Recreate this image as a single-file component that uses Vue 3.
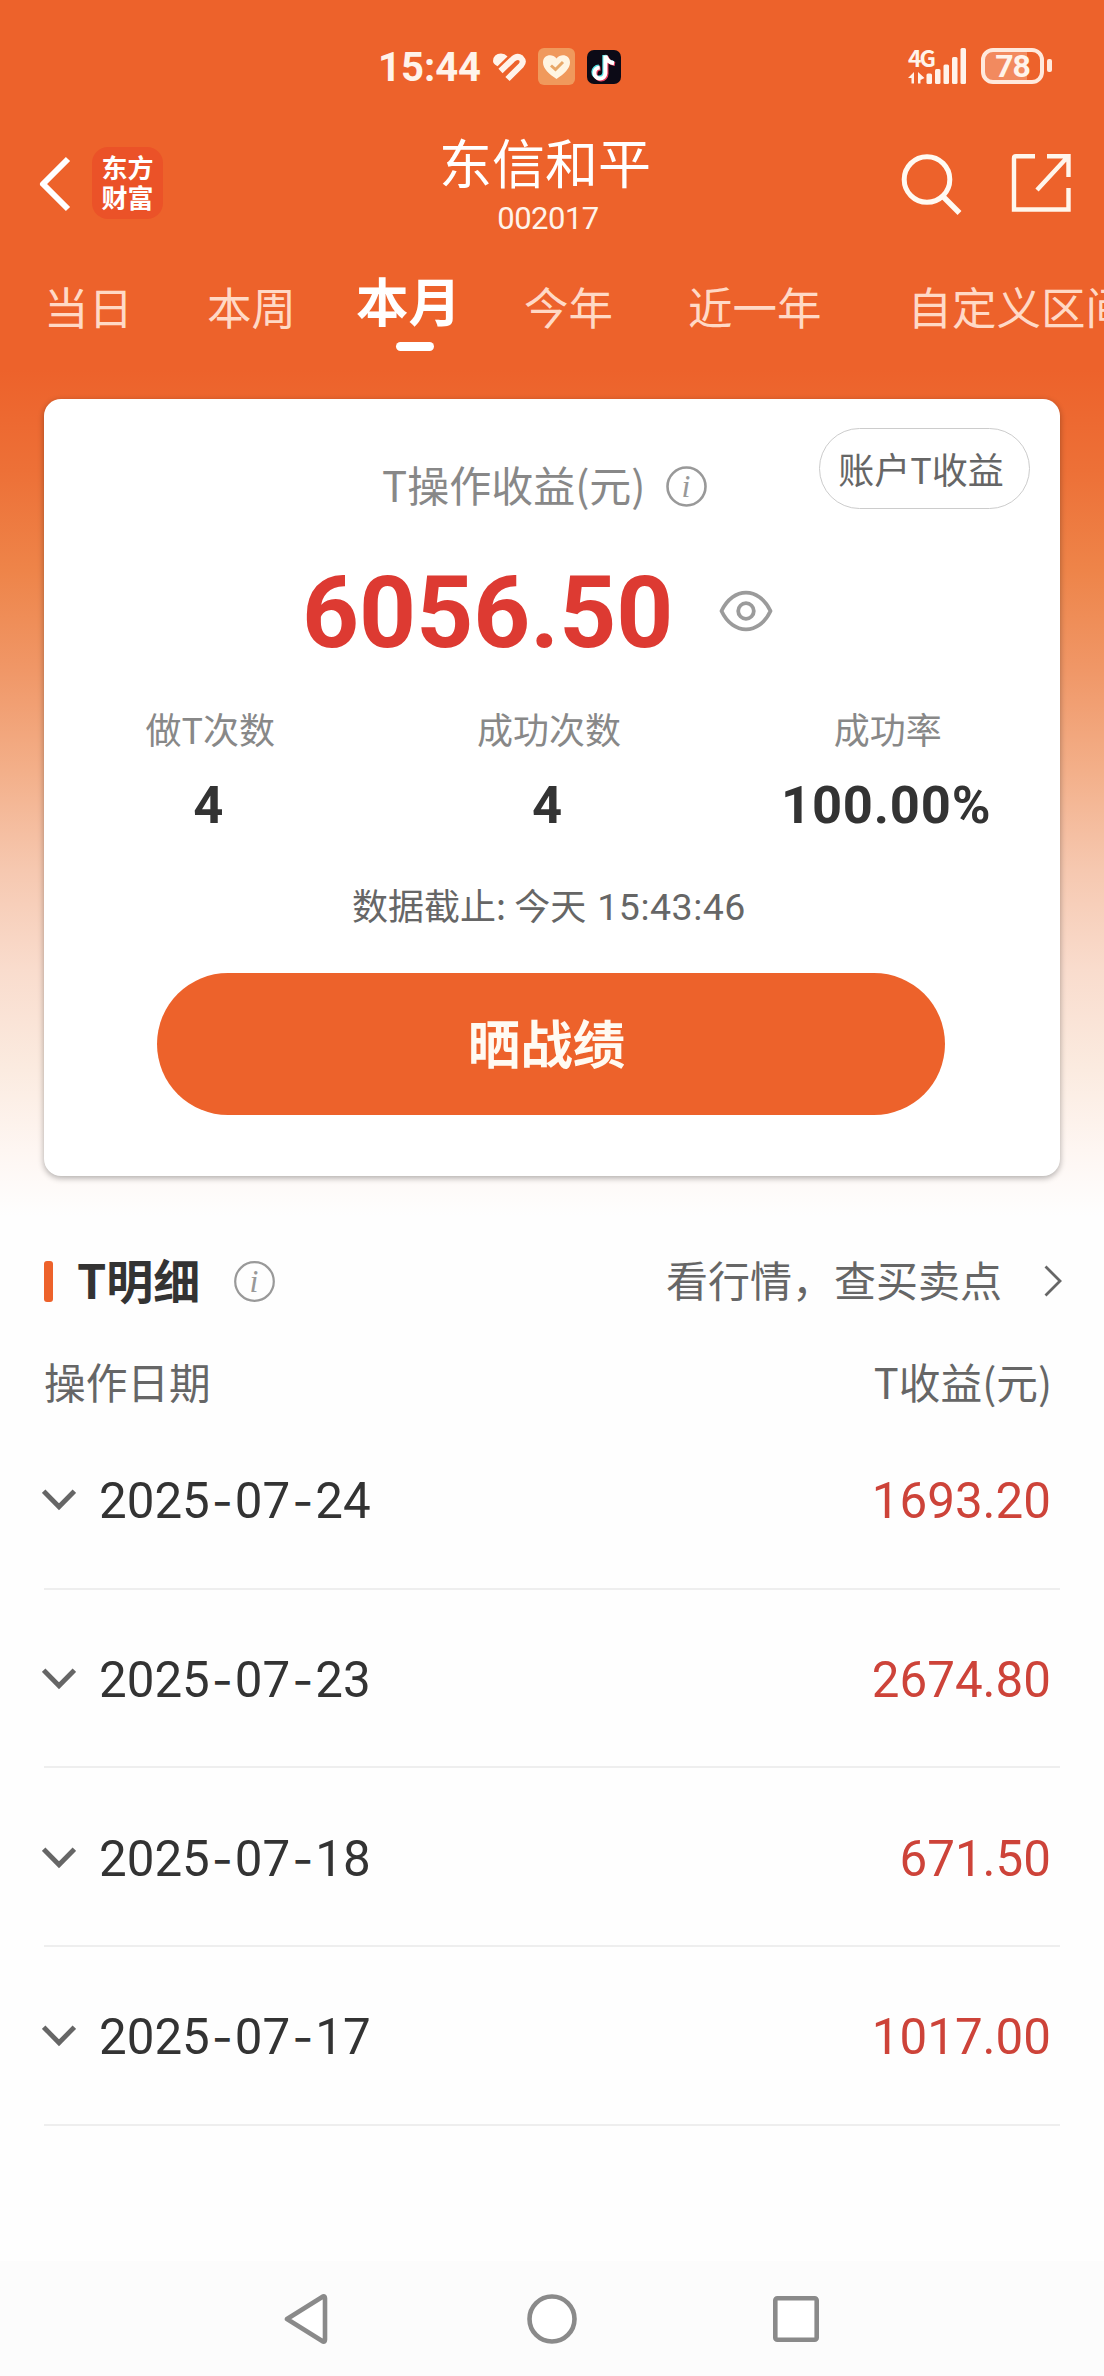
<script setup>
const tabs = [
  { label: '当日', gap: 44 },
  { label: '本周', gap: 74 },
  { label: '本月', gap: 60, active: true },
  { label: '今年', gap: 63 },
  { label: '近一年', gap: 75 },
  { label: '自定义区间', gap: 86 },
]

const stats = [
  { label: '做T次数', value: '4' },
  { label: '成功次数', value: '4' },
  { label: '成功率', value: '100.00%' },
]

const records = [
  { date: ['2025', '07', '24'], profit: '1693.20' },
  { date: ['2025', '07', '23'], profit: '2674.80' },
  { date: ['2025', '07', '18'], profit: '671.50' },
  { date: ['2025', '07', '17'], profit: '1017.00' },
]
</script>

<template>
  <div class="screen">
    <div class="hero">
      <div class="status">
        <div class="status-left">
          <span class="clock">15:44</span>
          <svg class="band" width="33" height="29" viewBox="0 0 33 29">
            <path d="M0 8Q.5 .8 8 .6Q12 .8 14.500 3.500L4.500 13.200Q0 11 0 8Z" fill="#fff3ea" />
            <path d="M7.500 18L19 7Q24 2 28 5Q31.500 8.500 28 12.500L14.500 26" fill="none" stroke="#fff3ea" stroke-width="6" />
            <path d="M10.500 22.500L23.500 9.800" fill="none" stroke="#ed622b" stroke-width="2" />
          </svg>
          <svg class="health" width="37" height="37" viewBox="0 0 37 37">
            <rect width="37" height="37" rx="6" fill="#f0995c" />
            <path d="M18.500 31C11 26 5 20.500 5 14.500C5 7 14 5 18.500 10.500C23 5 32 7 32 14.500C32 20.500 26 26 18.500 31Z" fill="#fff5e2" />
            <path d="M13 17.500L17.500 21.500L25 14" fill="none" stroke="#e8a868" stroke-width="3" />
          </svg>
          <svg class="tiktok" width="34" height="34" viewBox="0 0 34 34">
            <rect width="34" height="34" rx="7" fill="#0c0a16" />
            <g fill="none" stroke-width="4">
              <path d="M17.300 5V22.500A5.500 5.500 0 1 1 11.800 16.500M17.300 5Q18.500 11.500 26 12.500" stroke="#52dfe3" />
              <path d="M19.500 6.500V24A5.500 5.500 0 1 1 13.500 18.500M19.500 6.500Q21 13 28 14" stroke="#e8405f" />
              <path d="M18.400 5.500V23.200A5.500 5.500 0 1 1 12.700 17.500M18.400 5.500Q20 12.300 27 13.300" stroke="#fff" />
            </g>
          </svg>
        </div>
        <div class="status-right">
          <div class="network">
            <span class="net-type">4G</span>
            <svg width="60" height="36" viewBox="0 0 60 36" fill="#fff3ea">
              <path d="M0 30L6 24V35.500H3.500V30ZM16.500 30L10 24V35.500H12.500V32Z" />
              <rect x="18.500" y="25.500" width="5.500" height="10.500" rx="1.500" />
              <rect x="27" y="21" width="5.500" height="15" rx="1.500" />
              <rect x="35.500" y="16.500" width="5.500" height="19.500" rx="1.500" />
              <rect x="44" y="9" width="5.500" height="27" rx="1.500" />
              <rect x="52.500" y="0" width="5.500" height="36" rx="1.500" />
            </svg>
          </div>
          <div class="battery"><span>78</span></div>
          <i class="battery-tip"></i>
        </div>
      </div>

      <header class="header">
        <div class="header-side">
          <svg class="back" width="34" height="56" viewBox="0 0 34 56" fill="none" stroke="#fff" stroke-width="6">
            <path d="M30 3L5 28L30 53" stroke-linejoin="round" />
          </svg>
          <div class="logo"><span>东方</span><span>财富</span></div>
        </div>
        <div class="title">
          <h1>东信和平</h1>
          <p>002017</p>
        </div>
        <div class="header-side actions">
          <svg width="62" height="62" viewBox="0 0 62 62" fill="none" stroke="#fffaf2" stroke-width="5">
            <circle cx="26" cy="26.500" r="22.800" />
            <path d="M42 43.500L58.500 60" stroke-width="5.500" />
          </svg>
          <svg width="60" height="60" viewBox="0 0 60 60" fill="none" stroke="#fff6ec" stroke-width="4.400">
            <path d="M24 3.200H5Q3 3.200 3 5.200V56.500H57.500V35M36 3.200H57.500V24M57 3.500L26 37" />
          </svg>
        </div>
      </header>

      <nav class="tabs">
        <span
          v-for="tab in tabs"
          :key="tab.label"
          class="tab"
          :class="{ active: tab.active }"
          :style="{ marginLeft: tab.gap + 'px' }"
        >{{ tab.label }}</span>
      </nav>

      <section class="card">
        <button class="account">账户T收益</button>
        <div class="card-title">
          <span>T操作收益(元)</span>
          <svg width="41" height="41" viewBox="0 0 41 41">
            <circle cx="20.500" cy="20.500" r="19" fill="none" stroke="#999" stroke-width="2.600" />
            <text x="20" y="30.500" text-anchor="middle" class="info-i">i</text>
          </svg>
        </div>
        <div class="total">
          <strong>6056.50</strong>
          <svg width="54" height="42" viewBox="0 0 54 42" fill="none" stroke="#9b9b9b" stroke-width="3.800">
            <path d="M2.500 21C14-3.500 40-3.500 51.500 21C40 45.500 14 45.500 2.500 21Z" stroke-linejoin="round" />
            <circle cx="27" cy="21" r="7.800" />
          </svg>
        </div>
        <div class="stats">
          <div v-for="s in stats" :key="s.label" class="stat">
            <span>{{ s.label }}</span>
            <b>{{ s.value }}</b>
          </div>
        </div>
        <p class="asof">数据截止: 今天 <span>15:43:46</span></p>
        <button class="share">晒战绩</button>
      </section>
    </div>

    <main class="detail">
      <div class="detail-head">
        <i class="mark"></i>
        <h2>T明细</h2>
        <svg width="41" height="41" viewBox="0 0 41 41">
          <circle cx="20.500" cy="20.500" r="19.300" fill="none" stroke="#999" stroke-width="2.200" />
          <text x="20" y="30.500" text-anchor="middle" class="info-i">i</text>
        </svg>
        <a class="more">看行情，查买卖点</a>
        <svg class="more-arrow" width="18" height="32" viewBox="0 0 18 32" fill="none" stroke="#666" stroke-width="2.800">
          <path d="M1.500 1.500L16 16L1.500 30.500" />
        </svg>
      </div>
      <div class="columns">
        <span>操作日期</span>
        <span>T收益(元)</span>
      </div>
      <div v-for="r in records" :key="r.date.join('-')" class="row">
        <svg width="34" height="22" viewBox="0 0 34 22" fill="none" stroke="#666" stroke-width="4.800">
          <path d="M1.700 2.200L17 17.800L32.300 2.200" />
        </svg>
        <span class="date">{{ r.date[0] }}<i>-</i>{{ r.date[1] }}<i>-</i>{{ r.date[2] }}</span>
        <span class="profit">{{ r.profit }}</span>
      </div>
    </main>

    <footer class="navbar">
      <svg width="44" height="52" viewBox="0 0 44 52" fill="#fff" stroke="#8a8a8a" stroke-width="4.600" stroke-linejoin="round">
        <path d="M3 26L39 3.500Q41 3 41 5.500V46.500Q41 49 39 48.500Z" />
      </svg>
      <svg width="50" height="50" viewBox="0 0 50 50" fill="#fff" stroke="#8a8a8a" stroke-width="4.600">
        <circle cx="25" cy="25" r="22.500" />
      </svg>
      <svg width="46" height="46" viewBox="0 0 46 46" fill="#fff" stroke="#8a8a8a" stroke-width="4.600">
        <rect x="2.300" y="2.300" width="41.400" height="41.400" rx="2" />
      </svg>
    </footer>
  </div>
</template>

<style>
body {
  margin: 0;
  background: #fefefe;
}
</style>

<style scoped>
.screen {
  width: 1104px;
  height: 2376px;
  display: flex;
  flex-direction: column;
  overflow: hidden;
  background: #fefefe;
  font-family: "Noto Sans CJK SC", sans-serif;
}
h1, h2, p {
  margin: 0;
  font-weight: 400;
}
button {
  font-family: inherit;
  padding: 0;
}
svg {
  display: block;
  flex: none;
}
.hero {
  height: 1216px;
  box-sizing: border-box;
  flex: none;
  background: linear-gradient(#ed622b 0, #ed622b 370px, #ed7037 470px, #ee8449 570px, #f09767 670px, #f3af89 770px, #f6c8b0 870px, #f9dccd 970px, #fbebe0 1070px, #fef6f2 1150px, #fefefe 1216px);
}
.status {
  display: flex;
  justify-content: space-between;
  height: 134px;
  padding: 0 52px 0 378px;
}
.status-left {
  display: flex;
  align-items: flex-start;
}
.clock {
  font: 700 40px/40px Roboto, sans-serif;
  color: #fff3ea;
  margin-top: 48px;
  width: 115px;
}
.band { margin-top: 53px; }
.health { margin: 48px 0 0 12px; }
.tiktok { margin: 50px 0 0 12px; }
.status-right {
  display: flex;
  align-items: flex-start;
  padding-top: 48px;
}
.network {
  display: grid;
  margin-right: 13px;
}
.network > * { grid-area: 1 / 1; }
.net-type {
  font: 700 23px/18px "Noto Sans CJK SC", sans-serif;
  letter-spacing: -2px;
  color: #fff3ea;
}
.battery {
  box-sizing: border-box;
  width: 63px;
  height: 36px;
  border: 4px solid #ffe9dc;
  border-radius: 12px;
  background: linear-gradient(90deg, #f28a5f 42px, #ed622b 42px);
  text-align: center;
  color: #fff3ea;
  font: 700 32px/29px Roboto, sans-serif;
  letter-spacing: -1px;
}
.battery-tip {
  width: 5px;
  height: 13px;
  margin: 11px 0 0 3px;
  border-radius: 2px;
  background: #ffe9dc;
}
.header {
  display: grid;
  grid-template-columns: 442px 1fr 442px;
  height: 126px;
}
.header-side {
  display: flex;
  align-items: flex-start;
}
.back { margin: 22px 0 0 38px; }
.logo {
  display: flex;
  flex-direction: column;
  align-items: center;
  width: 71px;
  height: 72px;
  margin: 13px 0 0 20px;
  padding-top: 5px;
  box-sizing: border-box;
  border-radius: 16px;
  background: #eb5228;
  color: #fff;
  font: 700 26px/30px "Noto Sans CJK SC", sans-serif;
}
.title {
  text-align: center;
  margin-left: -14px;
  color: #fff;
}
.title h1 {
  margin-top: -3px;
  font-size: 53px;
  line-height: 60px;
  white-space: nowrap;
}
.title p {
  font: 400 31px/36px Roboto, sans-serif;
  letter-spacing: -0.500px;
  color: #fff3ea;
  margin: 10px 0 0 6px;
}
.actions { padding-left: 239px; }
.actions svg { margin: 19px 48px 0 0; }
.tabs {
  display: flex;
  align-items: flex-start;
  height: 139px;
  overflow: hidden;
}
.tab {
  flex: none;
  white-space: nowrap;
  font-size: 44.500px;
  line-height: 60px;
  padding-top: 16px;
  color: #ffd9c6;
}
.active {
  display: flex;
  flex-direction: column;
  align-items: center;
  padding-top: 9px;
  font-size: 52.500px;
  font-weight: 700;
  color: #fff;
}
.active::after {
  content: "";
  width: 38px;
  height: 9px;
  margin: 13px 0 0 12px;
  border-radius: 5px;
  background: #fff;
}
.card {
  position: relative;
  box-sizing: border-box;
  width: 1016px;
  height: 777px;
  margin: 0 auto;
  border-radius: 17px;
  background: #fff;
  box-shadow: 0 2px 6px rgba(0, 0, 0, 0.32);
}
.account {
  position: absolute;
  top: 29px;
  right: 30px;
  width: 211px;
  height: 81px;
  padding: 0 7px 2px 0;
  border: 1.500px solid #ccc;
  border-radius: 41px;
  background: #fff;
  color: #666;
  font-size: 36px;
  line-height: 70px;
}
.card-title {
  display: flex;
  align-items: center;
  gap: 20px;
  height: 60px;
  padding: 57px 0 0 338px;
  color: #888;
  font-size: 42px;
}
.card-title span { margin-top: -6px; }
.info-i {
  font: italic 32px "Liberation Serif", serif;
  fill: #999;
}
.total {
  display: flex;
  align-items: center;
  height: 100px;
  margin-top: 45px;
  padding-left: 258px;
}
.total strong {
  width: 417px;
  margin-top: 4px;
  font: 700 99.500px/100px Roboto, sans-serif;
  color: #dd3a32;
}
.stats {
  display: grid;
  grid-template-columns: repeat(3, 1fr);
  margin: 39px 3px 0 -3px;
}
.stat {
  display: flex;
  flex-direction: column;
  align-items: center;
  color: #888;
  font-size: 36px;
  line-height: 56px;
}
.stat b {
  margin: 19px 3px 0 0;
  font: 700 52.500px/60px Roboto, sans-serif;
  letter-spacing: 0.800px;
  color: #333;
}
.asof {
  margin: 41px 6px 0 0;
  text-align: center;
  color: #666;
  font-size: 36px;
  line-height: 56px;
}
.asof span {
  margin-left: 3px;
  font: 400 37.500px/50px Roboto, sans-serif;
  letter-spacing: 0.500px;
}
.share {
  display: block;
  width: 788px;
  height: 142px;
  margin: 41px 0 0 113px;
  padding: 0 9px 6px 0;
  border: 0;
  border-radius: 71px;
  background: #ed622b;
  color: #fffaf2;
  font-size: 52.500px;
  font-weight: 700;
}
.detail {
  display: flex;
  flex-direction: column;
  height: 1045px;
  flex: none;
  padding: 35px 44px 0;
  box-sizing: border-box;
}
.detail-head {
  display: flex;
  align-items: center;
  height: 60px;
}
.mark {
  width: 9px;
  height: 41px;
  border-radius: 3px;
  background: #ed622b;
}
.detail-head h2 {
  margin: -5px 34px 0 24px;
  font-size: 47px;
  line-height: 60px;
  font-weight: 700;
  color: #333;
}
.more {
  margin: -4px 0 0 auto;
  color: #666;
  font-size: 42px;
  line-height: 60px;
}
.more-arrow { margin: 0 -2px 0 42px; }
.columns {
  display: flex;
  justify-content: space-between;
  height: 100px;
  padding: 0 8px 0 0;
  box-sizing: border-box;
  color: #666;
  font-size: 41.700px;
  line-height: 140px;
}
.row {
  display: flex;
  align-items: center;
  height: 178.700px;
  box-sizing: border-box;
  border-bottom: 2px solid #eee;
  padding-right: 9px;
}
.row svg { margin: 2px 0 0 -2px; }
.date, .profit {
  margin-top: 4px;
  font: 400 49.300px/60px Roboto, sans-serif;
}
.date {
  margin-left: 23px;
  color: #333;
}
.date i {
  display: inline-block;
  width: 25px;
  text-align: center;
  font: 400 46px/50px Inter, sans-serif;
}
.profit {
  margin-left: auto;
  color: #cd4339;
}
.navbar {
  display: flex;
  align-items: center;
  height: 115px;
  flex: none;
  padding: 0 0 0 284px;
  box-sizing: border-box;
  background: #fcfcfc;
}
.navbar svg + svg { margin-left: 199px; }
.navbar svg:last-child { margin-left: 196px; }
</style>
